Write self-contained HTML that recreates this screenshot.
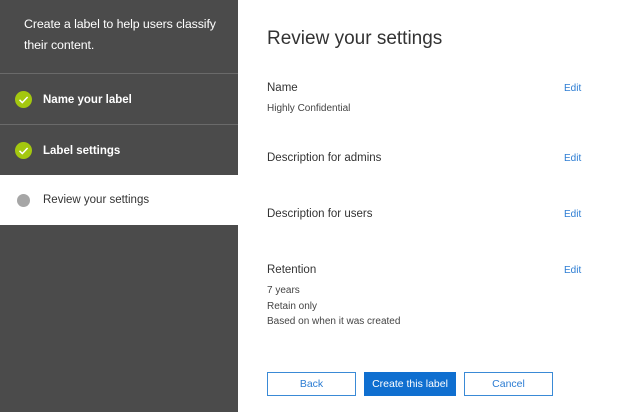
<!DOCTYPE html>
<html><head><style>
body{margin:0;width:623px;height:412px;overflow:hidden;font-family:"Liberation Sans",sans-serif;background:#fff;position:relative}
.sb{position:absolute;left:0;top:0;width:238px;height:412px;background:#4b4b4b}
.intro{position:absolute;left:24px;top:14px;color:#fff;font-size:12.4px;line-height:21px;width:212px;letter-spacing:-0.1px}
.line{position:absolute;left:0;width:238px;height:1px;background:#6a6a6a}
.step{position:absolute;left:0;width:238px;height:50px;font-size:11.5px;font-weight:bold;color:#fff}
.step span{position:absolute;left:43px;top:19px}
.chk{position:absolute;left:15px;top:16px;width:17px;height:17px;border-radius:50%;background:#a4c80f}
.chk svg{position:absolute;left:0;top:0}
.cur{background:#fff;color:#333;font-weight:normal}
.dot{position:absolute;left:17px;top:19px;width:13px;height:13px;border-radius:50%;background:#a6a6a6}
h1{position:absolute;left:267px;top:28px;margin:0;font-weight:normal;font-size:19px;color:#333}
.lbl{position:absolute;left:267px;font-size:11.5px;color:#333}
.val{position:absolute;left:267px;font-size:10px;color:#444;line-height:15.5px}
.edit{position:absolute;left:564px;font-size:10px;color:#2b7cd3}
.btn{position:absolute;top:372px;height:24px;box-sizing:border-box;border:1px solid #3a8ad6;font-size:10.5px;color:#2b7cd3;text-align:center;line-height:22px;background:#fff}
</style></head><body>
<div class="sb"></div>
<div class="intro">Create a label to help users classify<br>their content.</div>
<div class="line" style="top:73px"></div>
<div class="step" style="top:75px"><div class="chk"><svg width="17" height="17"><path d="M4.5 8.8l2.8 2.8 5.3-5.6" stroke="#fff" stroke-width="1.5" fill="none"/></svg></div><span>Name your label</span></div>
<div class="line" style="top:124px"></div>
<div class="step" style="top:126px"><div class="chk"><svg width="17" height="17"><path d="M4.5 8.8l2.8 2.8 5.3-5.6" stroke="#fff" stroke-width="1.5" fill="none"/></svg></div><span>Label settings</span></div>
<div class="step cur" style="top:175px"><div class="dot"></div><span>Review your settings</span></div>
<h1>Review your settings</h1>
<div class="lbl" style="top:82px">Name</div><div class="edit" style="top:83px">Edit</div>
<div class="val" style="top:101px">Highly Confidential</div>
<div class="lbl" style="top:152px">Description for admins</div><div class="edit" style="top:153px">Edit</div>
<div class="lbl" style="top:208px">Description for users</div><div class="edit" style="top:209px">Edit</div>
<div class="lbl" style="top:264px">Retention</div><div class="edit" style="top:265px">Edit</div>
<div class="val" style="top:283px">7 years<br>Retain only<br>Based on when it was created</div>
<div class="btn" style="left:267px;width:89px">Back</div>
<div class="btn" style="left:364px;width:92px;background:#0f6fd0;border-color:#0f6fd0;color:#fff">Create this label</div>
<div class="btn" style="left:464px;width:89px">Cancel</div>
</body></html>
